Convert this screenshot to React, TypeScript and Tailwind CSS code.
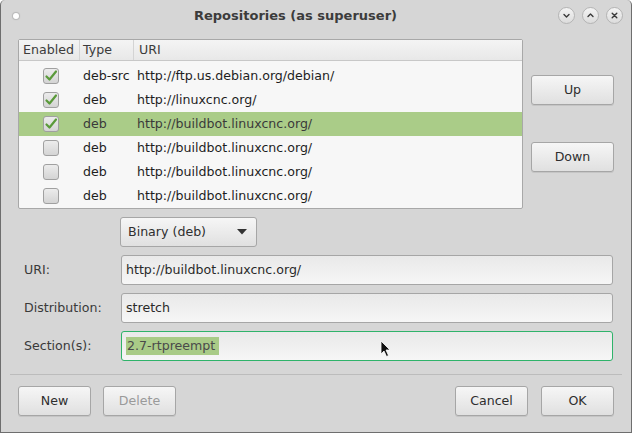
import React from 'react';

const rows = [
  { on: true, type: 'deb-src', uri: 'http://ftp.us.debian.org/debian/' },
  { on: true, type: 'deb', uri: 'http://linuxcnc.org/' },
  { on: true, type: 'deb', uri: 'http://buildbot.linuxcnc.org/', sel: true },
  { on: false, type: 'deb', uri: 'http://buildbot.linuxcnc.org/' },
  { on: false, type: 'deb', uri: 'http://buildbot.linuxcnc.org/' },
  { on: false, type: 'deb', uri: 'http://buildbot.linuxcnc.org/' },
];

const Check = ({ on }: { on: boolean }) => (
  <div className="w-[16px] h-[16px] rounded-[3px] border border-[#a0a0a0] bg-gradient-to-b from-[#ececec] to-[#d4d4d4] flex items-center justify-center">
    {on && (
      <svg width="14" height="14" viewBox="0 0 14 14">
        <path d="M2.5 7.5 L5.5 10.5 L12 2.5" fill="none" stroke="#5a9a3a" strokeWidth="2.2" strokeLinecap="round" strokeLinejoin="round" />
      </svg>
    )}
  </div>
);

const Btn = ({ children, w = 'w-[73px]', disabled = false }: { children: React.ReactNode; w?: string; disabled?: boolean }) => (
  <div
    className={`${w} h-[30px] rounded-[3px] border border-[#a6a6a6] bg-gradient-to-b from-[#f6f6f6] to-[#e0e0e0] shadow-[0_1px_0_rgba(0,0,0,0.08)] flex items-center justify-center text-[12.6px] ${disabled ? 'text-[#9a9a9a]' : 'text-[#2e2e2e]'}`}
  >
    {children}
  </div>
);

const TitleBtn = ({ d }: { d: string }) => (
  <div className="w-[17px] h-[17px] rounded-full border border-[#b4b4b4] bg-gradient-to-b from-[#f4f4f4] to-[#dcdcdc] flex items-center justify-center">
    <svg width="9" height="9" viewBox="0 0 9 9">
      <path d={d} fill="none" stroke="#3a3a3a" strokeWidth="1.4" strokeLinecap="round" strokeLinejoin="round" />
    </svg>
  </div>
);

const Field = ({ label, value, focus = false }: { label: string; value: string; focus?: boolean }) => (
  <div className="flex items-center h-[30px]">
    <div className="w-[102px] pl-[5px] text-[12.6px] text-[#3a3a3a]">{label}</div>
    <div
      className={`relative w-[492px] h-[30px] rounded-[3px] border bg-gradient-to-b from-[#e9e9e9] to-[#f6f6f6] flex items-center pl-[4px] text-[12.6px] ${focus ? 'border-[#2fb36a]' : 'border-[#a6a6a6]'}`}
    >
      {focus ? (
        <span className="bg-[#a9cb87] text-[#4a4a4a] pl-[1px] pr-[4px] leading-[18px]">{value}</span>
      ) : (
        <span className="text-[#2a2a2a]">{value}</span>
      )}
      {focus && (
        <svg className="absolute left-[258px] top-[8px]" width="12" height="18" viewBox="0 0 12 18">
          <path d="M1 1 L1 14 L4 11 L6.5 16.5 L8.5 15.5 L6 10 L10 10 Z" fill="#111" stroke="#fff" strokeWidth="0.8" />
        </svg>
      )}
    </div>
  </div>
);

export default function App() {
  return (
    <div className="w-[632px] h-[433px] bg-[#d6d6d6] border-x border-b border-[#6e6e6e] rounded-t-[5px] flex flex-col" style={{ fontFamily: '"DejaVu Sans", sans-serif' }}>
      {/* Title bar */}
      <div className="h-[31px] flex items-center px-[10px] relative">
        <div className="w-[6px] h-[6px] rounded-full bg-white shadow-[0_0_1px_1px_rgba(0,0,0,0.15)] ml-[2px]" />
        <div className="flex-1 text-center text-[13px] font-bold text-[#3c3c3c] pl-[14px]">Repositories (as superuser)</div>
        <div className="flex gap-[7px] mr-[-2px]">
          <TitleBtn d="M2 3.5 L4.5 6 L7 3.5" />
          <TitleBtn d="M2 5.5 L4.5 3 L7 5.5" />
          <TitleBtn d="M2.2 2.2 L6.8 6.8 M6.8 2.2 L2.2 6.8" />
        </div>
      </div>

      <div className="flex flex-col pl-[17px] pt-[8px]">
        {/* Tree + side buttons */}
        <div className="flex">
          <div className="w-[505px] h-[170px] border border-[#a8a8a8] bg-[#f7f7f7] rounded-[2px] text-[12.6px]">
            <div className="h-[21px] flex items-center bg-gradient-to-b from-[#f4f4f4] to-[#e8e8e8] border-b border-[#c8c8c8] text-[#3c3c3c]">
              <div className="w-[61px] pl-[4px] border-r border-[#d4d4d4] h-full flex items-center">Enabled</div>
              <div className="w-[54px] pl-[3px] border-r border-[#d4d4d4] h-full flex items-center">Type</div>
              <div className="pl-[5px]">URI</div>
            </div>
            <div className="pt-[3px]">
              {rows.map((r, i) => (
                <div key={i} className={`h-[24px] flex items-center ${r.sel ? 'bg-[#aacc88] text-[#3a3a3a]' : 'text-[#1e1e1e]'}`}>
                  <div className="w-[61px] flex justify-center pl-[2px]">
                    <Check on={r.on} />
                  </div>
                  <div className="w-[54px] pl-[3px]">{r.type}</div>
                  <div className="pl-[3px]">{r.uri}</div>
                </div>
              ))}
            </div>
          </div>
          <div className="ml-[8px] flex flex-col pt-[36px] gap-[37px]">
            <Btn w="w-[83px]">Up</Btn>
            <Btn w="w-[83px]">Down</Btn>
          </div>
        </div>

        {/* Combo */}
        <div className="mt-[8px] ml-[102px] w-[137px] h-[30px] rounded-[3px] border border-[#a6a6a6] bg-gradient-to-b from-[#f6f6f6] to-[#e0e0e0] flex items-center justify-between pl-[7px] pr-[9px] text-[12.6px] text-[#2e2e2e]">
          <span>Binary (deb)</span>
          <svg width="10" height="6" viewBox="0 0 10 6">
            <path d="M0 0 L10 0 L5 5.5 Z" fill="#333" />
          </svg>
        </div>

        <div className="flex flex-col gap-[8px] mt-[8px] ml-[1px]">
          <Field label="URI:" value="http://buildbot.linuxcnc.org/" />
          <Field label="Distribution:" value="stretch" />
          <Field label="Section(s):" value="2.7-rtpreempt" focus />
        </div>
      </div>

      {/* Separator */}
      <div className="mx-[9px] mt-[13px] h-px bg-[#bcbcbc]" />

      {/* Bottom buttons */}
      <div className="flex items-center px-[17px] mt-[11px]">
        <Btn>New</Btn>
        <div className="ml-[12px]">
          <Btn disabled>Delete</Btn>
        </div>
        <div className="flex-1" />
        <Btn>Cancel</Btn>
        <div className="ml-[13px]">
          <Btn>OK</Btn>
        </div>
      </div>
    </div>
  );
}
